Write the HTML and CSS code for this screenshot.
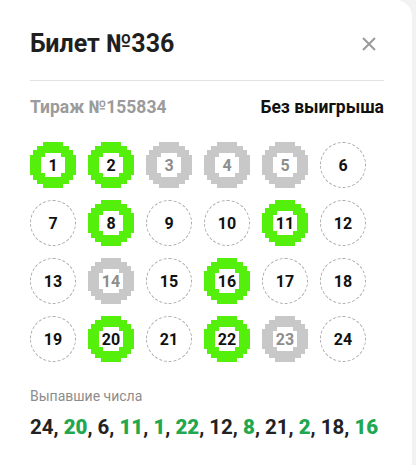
FILE: index.html
```html
<!DOCTYPE html>
<html lang="ru">
<head>
  <meta charset="utf-8">
  <title>Билет №336</title>
  <link rel="stylesheet" href="styles.css">
</head>
<body>
  <svg width="0" height="0" class="defs">
    <symbol id="ring" viewBox="0 0 46 46">
      <path fill-rule="evenodd" d="M13 0H33V4H39V8H43V13H46V33H43V38H39V42H33V46H13V42H7V38H3V33H0V13H3V8H7V4H13Z M15 11V15H11V31H15V35H31V31H35V15H31V11Z"/>
    </symbol>
  </svg>

  <div class="card">
    <header class="head">
      <h1>Билет №336</h1>
      <button class="close" aria-label="Закрыть">
        <svg width="14" height="14" viewBox="0 0 14 14"><path d="M1 1L13 13M13 1L1 13" stroke="currentColor" stroke-width="2"/></svg>
      </button>
    </header>

    <div class="draw">
      <span class="draw-no">Тираж №155834</span>
      <span class="draw-result">Без выигрыша</span>
    </div>

    <div class="balls">
      <div class="ball hit"><svg><use href="#ring"/></svg><span>1</span></div>
      <div class="ball hit"><svg><use href="#ring"/></svg><span>2</span></div>
      <div class="ball miss"><svg><use href="#ring"/></svg><span>3</span></div>
      <div class="ball miss"><svg><use href="#ring"/></svg><span>4</span></div>
      <div class="ball miss"><svg><use href="#ring"/></svg><span>5</span></div>
      <div class="ball"><span>6</span></div>
      <div class="ball"><span>7</span></div>
      <div class="ball hit"><svg><use href="#ring"/></svg><span>8</span></div>
      <div class="ball"><span>9</span></div>
      <div class="ball"><span>10</span></div>
      <div class="ball hit"><svg><use href="#ring"/></svg><span>11</span></div>
      <div class="ball"><span>12</span></div>
      <div class="ball"><span>13</span></div>
      <div class="ball miss"><svg><use href="#ring"/></svg><span>14</span></div>
      <div class="ball"><span>15</span></div>
      <div class="ball hit"><svg><use href="#ring"/></svg><span>16</span></div>
      <div class="ball"><span>17</span></div>
      <div class="ball"><span>18</span></div>
      <div class="ball"><span>19</span></div>
      <div class="ball hit"><svg><use href="#ring"/></svg><span>20</span></div>
      <div class="ball"><span>21</span></div>
      <div class="ball hit"><svg><use href="#ring"/></svg><span>22</span></div>
      <div class="ball miss"><svg><use href="#ring"/></svg><span>23</span></div>
      <div class="ball"><span>24</span></div>
    </div>

    <div class="drawn">
      <p class="drawn-title">Выпавшие числа</p>
      <p class="drawn-list">24, <b>20</b>, 6, <b>11</b>, <b>1</b>, <b>22</b>, 12, <b>8</b>, 21, <b>2</b>, 18, <b>16</b></p>
    </div>
  </div>
</body>
</html>
```

FILE: styles.css
```css
* {
  margin: 0;
  padding: 0;
  box-sizing: border-box;
  font-family: Roboto, 'Liberation Sans', sans-serif;
}

body {
  background: #f2f2f2;
  height: 465px;
  overflow: hidden;
}

.defs {
  position: absolute;
}

.card {
  width: 412px;
  height: 465px;
  background: #fff;
  border-radius: 0 16px 0 0;
  padding: 28px 28px 0 30px;
}

.head {
  display: flex;
  justify-content: space-between;
  align-items: center;
  padding: 0 8px 20px 0;
  border-bottom: 1px solid #e3e3e3;
}

.head h1 {
  font-size: 25px;
  line-height: 32px;
  font-weight: 700;
  color: #1f1f1f;
}

.close {
  border: none;
  background: none;
  color: #9a9a9a;
  display: flex;
  cursor: pointer;
}

.draw {
  display: flex;
  justify-content: space-between;
  align-items: center;
  margin-top: 16px;
  font-size: 17.5px;
  line-height: 20px;
  font-weight: 700;
}

.draw-no {
  color: #9b9b9b;
}

.draw-result {
  color: #111;
}

.balls {
  display: grid;
  grid-template-columns: repeat(6, 46px);
  grid-auto-rows: 46px;
  gap: 12px;
  margin-top: 25px;
}

.ball {
  position: relative;
  display: flex;
  align-items: center;
  justify-content: center;
  border: 1px dashed #a8a8a8;
  border-radius: 50%;
  font-size: 16px;
  font-weight: 700;
  color: #111;
}

.ball svg {
  position: absolute;
  left: 0;
  top: 0;
  width: 46px;
  height: 46px;
}

.ball span {
  position: relative;
}

.ball.hit,
.ball.miss {
  border: none;
}

.ball.hit svg {
  fill: #55ef0c;
}

.ball.miss svg {
  fill: #c8c8c8;
}

.ball.miss span {
  color: #8d8d8d;
}

.drawn {
  margin-top: 25px;
}

.drawn-title {
  font-size: 14px;
  line-height: 18px;
  color: #8c8c8c;
}

.drawn-list {
  margin-top: 10px;
  font-size: 20.5px;
  line-height: 24px;
  font-weight: 700;
  color: #222;
}

.drawn-list b {
  color: #1fa84f;
}
```
